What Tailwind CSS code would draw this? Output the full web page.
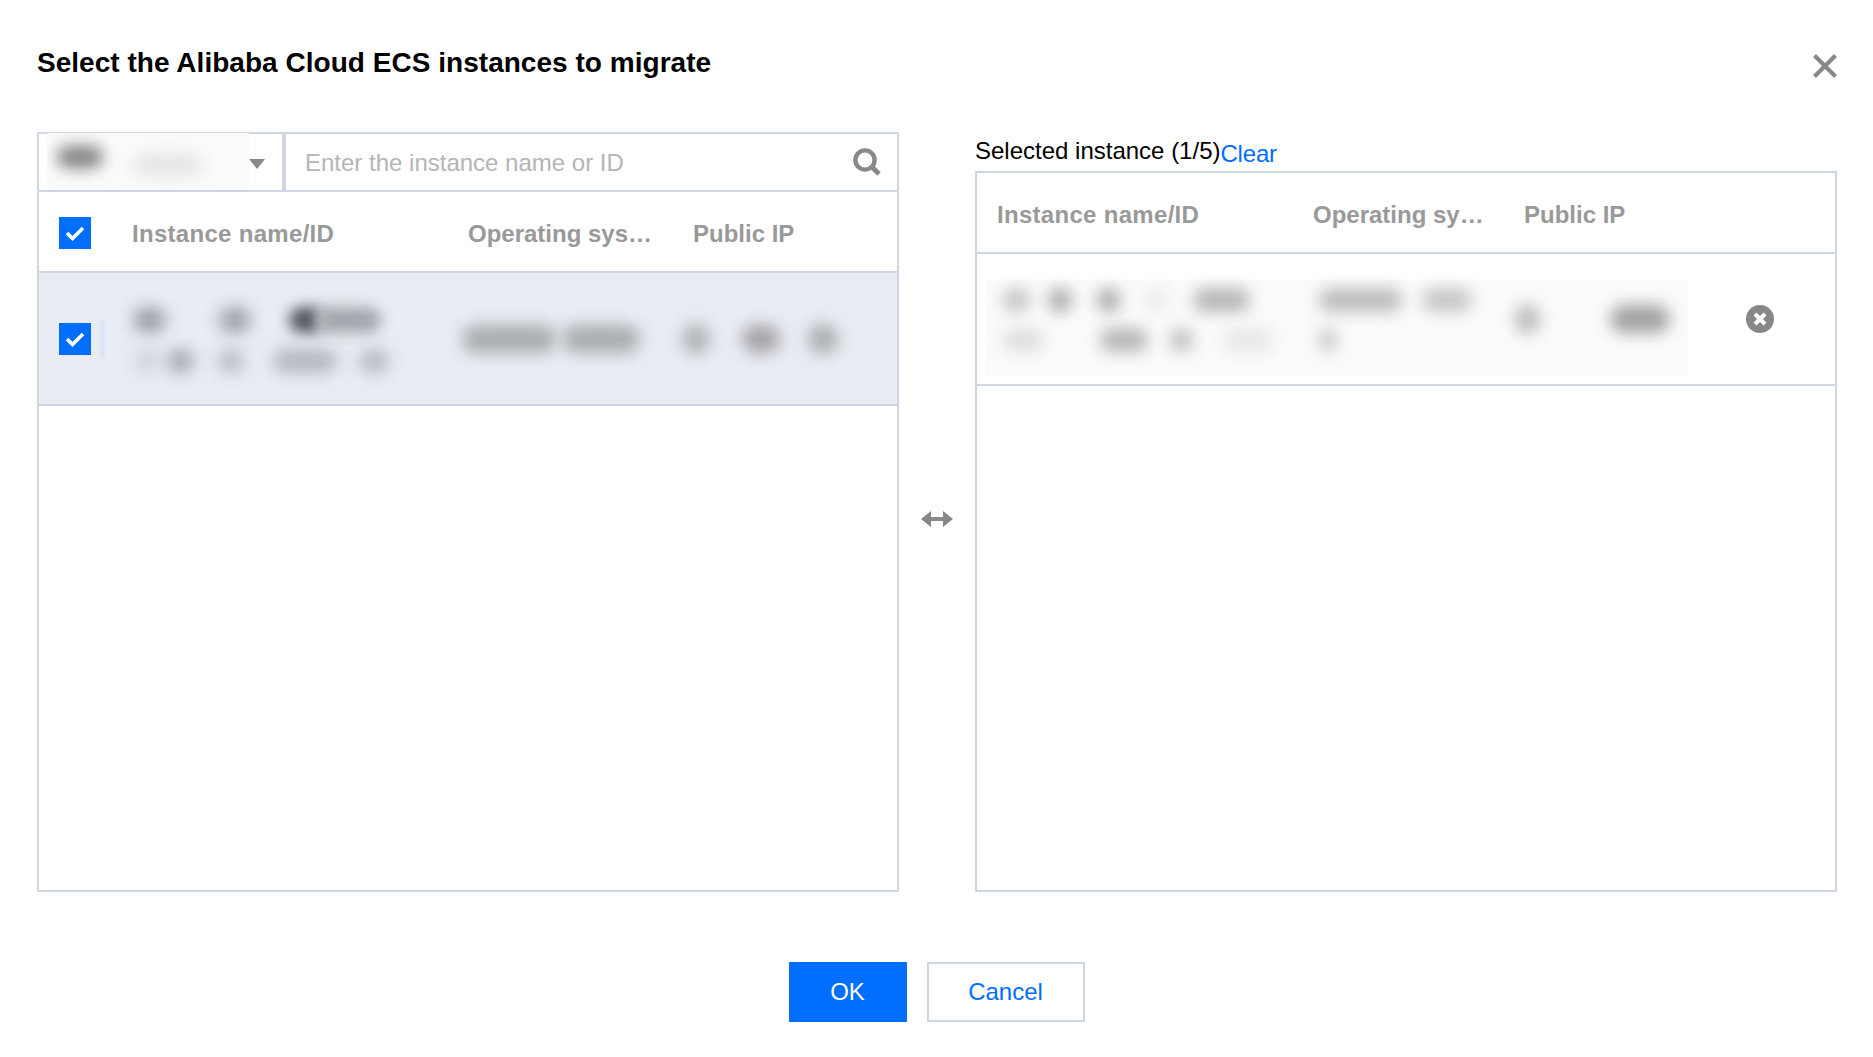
<!DOCTYPE html>
<html>
<head>
<meta charset="utf-8">
<script src="https://cdn.jsdelivr.net/npm/@tailwindcss/browser@4"></script>
</head>
<body class="bg-white overflow-hidden font-['Liberation_Sans',Arial,sans-serif]">
<div class="w-[1873px] h-[1057px] px-[37px] flex flex-col">
  <div class="flex justify-between items-start pt-[45px] h-[132px] -mr-[1px]">
    <h1 class="text-[28px] leading-[36px] font-bold text-black tracking-[0.03px]">Select the Alibaba Cloud ECS instances to migrate</h1>
    <svg class="mt-[9px]" width="24" height="24" viewBox="0 0 24 24"><path d="M1.5 1.5L22.5 22.5M22.5 1.5L1.5 22.5" stroke="#888888" stroke-width="4.2" fill="none"/></svg>
  </div>

  <div class="flex h-[760px]">
    <!-- left panel -->
    <div class="w-[862px] shrink-0 border-2 border-[#cfd6e1] flex flex-col">
      <div class="h-[58px] flex border-b-2 border-[#cfd6e1]">
        <div class="w-[243px] flex items-center relative">
          <div class="ml-[8px] -mt-[1px] w-[202px] h-[57px] bg-[#fbfbfb] overflow-hidden flex items-start">
            <div class="ml-[10px] mt-[13px] w-[46px] h-[22px] rounded-full bg-[#808080] blur-[8px]"></div>
            <div class="ml-[30px] mt-[20px] w-[70px] h-[24px] rounded-full bg-[#e6e6e6] blur-[8px]"></div>
          </div>
          <svg class="mt-[3px]" width="16" height="10" viewBox="0 0 16 10"><path d="M0 0H16L8 10Z" fill="#888888"/></svg>
        </div>
        <div class="w-[4px] bg-[#cfd6e1]"></div>
        <div class="flex-1 flex items-center justify-between pl-[19px] pr-[15px]">
          <span class="text-[24px] text-[#b5b5b5] mt-[2px]">Enter the instance name or ID</span>
          <svg width="30" height="30" viewBox="0 0 30 30"><circle cx="13" cy="13" r="9.6" fill="none" stroke="#888888" stroke-width="4.4"/><path d="M20 20L27 27" stroke="#888888" stroke-width="5" fill="none"/></svg>
        </div>
      </div>
      <div class="h-[81px] flex items-center border-b-2 border-[#cfd6e1] pt-[3px]">
        <span class="ml-[20px] w-[32px] h-[32px] bg-[#006eff] flex items-center justify-center shrink-0">
          <svg width="20" height="16" viewBox="0 0 20 16"><path d="M2 8L7.5 13.5L18 3" stroke="#ffffff" stroke-width="3.6" fill="none"/></svg>
        </span>
        <span class="ml-[41px] w-[336px] mt-[1px] text-[24px] font-bold text-[#999999] tracking-[0.3px]">Instance name/ID</span>
        <span class="w-[225px] mt-[1px] text-[24px] font-bold text-[#999999] whitespace-nowrap">Operating sys…</span>
        <span class="mt-[1px] text-[24px] font-bold text-[#999999]">Public IP</span>
      </div>
      <div class="h-[133px] bg-[#e9ecf2] flex items-center border-b-2 border-[#cfd6e1]">
        <span class="ml-[20px] w-[32px] h-[32px] bg-[#006eff] flex items-center justify-center shrink-0">
          <svg width="20" height="16" viewBox="0 0 20 16"><path d="M2 8L7.5 13.5L18 3" stroke="#ffffff" stroke-width="3.6" fill="none"/></svg>
        </span>
        <span class="ml-[10px] w-[3px] h-[38px] bg-[#d3e2f8] blur-[1px]"></span>
        <div class="ml-[28px] w-[328px] flex flex-col gap-[16px] mt-[3px]">
          <div class="flex h-[26px]">
            <i class="ml-[1px] w-[33px] bg-[#9ea2a8] rounded-full blur-[8px]"></i>
            <i class="ml-[53px] w-[32px] bg-[#a0a4aa] rounded-full blur-[8px]"></i>
            <i class="ml-[38px] w-[30px] bg-[#54575d] rounded-l-full blur-[7px]"></i>
            <i class="w-[62px] bg-[#a3a7ac] rounded-r-full blur-[7px]"></i>
          </div>
          <div class="flex h-[24px]">
            <i class="ml-[3px] w-[24px] bg-[#cfd2d7] rounded-full blur-[8px]"></i>
            <i class="ml-[8px] w-[27px] bg-[#a7aab0] rounded-full blur-[8px]"></i>
            <i class="ml-[24px] w-[26px] bg-[#babdc3] rounded-full blur-[8px]"></i>
            <i class="ml-[29px] w-[64px] bg-[#b5b8be] rounded-full blur-[8px]"></i>
            <i class="ml-[22px] w-[30px] bg-[#b8bbc1] rounded-full blur-[8px]"></i>
          </div>
        </div>
        <i class="ml-[2px] w-[94px] h-[28px] bg-[#a9adb1] rounded-full blur-[8px]"></i>
        <i class="ml-[6px] w-[78px] h-[28px] bg-[#a9adb1] rounded-full blur-[8px]"></i>
        <i class="ml-[42px] w-[28px] h-[30px] bg-[#afb2b6] rounded-full blur-[8px]"></i>
        <i class="ml-[32px] w-[38px] h-[28px] bg-[#a4a4aa] rounded-full blur-[8px]"></i>
        <i class="ml-[28px] w-[30px] h-[30px] bg-[#a9adb0] rounded-full blur-[8px]"></i>
      </div>
      <div class="flex-1"></div>
    </div>

    <!-- swap arrow -->
    <div class="w-[76px] shrink-0 flex items-center justify-center">
      <svg class="mt-[13px]" width="32" height="16" viewBox="0 0 32 16"><path d="M0 8L10 0V6H22V0L32 8L22 16V10H10V16Z" fill="#888888"/></svg>
    </div>

    <!-- right panel -->
    <div class="w-[862px] shrink-0 flex flex-col">
      <div class="h-[39px] flex items-start whitespace-nowrap text-[24px] leading-[36px] text-black">
        <span class="mt-[1px]">Selected instance (1/5)</span><span class="mt-[4px] text-[#006eff] tracking-[-0.2px]">Clear</span>
      </div>
      <div class="flex-1 border-2 border-[#cfd6e1] flex flex-col">
        <div class="h-[81px] flex items-center border-b-2 border-[#cfd6e1] pt-[3px]">
          <span class="ml-[20px] w-[316px] mt-[1px] text-[24px] font-bold text-[#999999] tracking-[0.3px]">Instance name/ID</span>
          <span class="w-[211px] mt-[1px] text-[24px] font-bold text-[#999999] whitespace-nowrap">Operating sy…</span>
          <span class="mt-[1px] text-[24px] font-bold text-[#999999]">Public IP</span>
        </div>
        <div class="h-[132px] flex items-center border-b-2 border-[#cfd6e1]">
          <div class="ml-[8px] w-[703px] h-[96px] mt-[18px] bg-[#fbfbfb] flex items-center">
            <div class="ml-[18px] w-[302px] flex flex-col gap-[16px] -mt-[16px]">
              <div class="flex h-[24px]">
                <i class="w-[27px] bg-[#c4c4c4] rounded-full blur-[8px]"></i>
                <i class="ml-[18px] w-[24px] bg-[#a8a8a8] rounded-full blur-[8px]"></i>
                <i class="ml-[25px] w-[23px] bg-[#a8a8a8] rounded-full blur-[8px]"></i>
                <i class="ml-[25px] w-[25px] bg-[#ececec] rounded-full blur-[8px]"></i>
                <i class="ml-[23px] w-[57px] bg-[#b6b6b6] rounded-full blur-[8px]"></i>
              </div>
              <div class="flex h-[24px]">
                <i class="w-[40px] bg-[#dedede] rounded-full blur-[8px]"></i>
                <i class="ml-[57px] w-[48px] bg-[#b6b6b6] rounded-full blur-[8px]"></i>
                <i class="ml-[22px] w-[23px] bg-[#bebebe] rounded-full blur-[8px]"></i>
                <i class="ml-[30px] w-[50px] bg-[#e8e8e8] rounded-full blur-[8px]"></i>
              </div>
            </div>
            <div class="ml-[14px] w-[196px] flex flex-col gap-[16px] -mt-[16px]">
              <div class="flex h-[24px]">
                <i class="w-[83px] bg-[#bcbcbc] rounded-full blur-[8px]"></i>
                <i class="ml-[20px] w-[50px] bg-[#c6c6c6] rounded-full blur-[8px]"></i>
              </div>
              <div class="flex h-[24px]">
                <i class="w-[18px] bg-[#c6c6c6] rounded-full blur-[8px]"></i>
              </div>
            </div>
            <i class="w-[25px] h-[30px] -mt-[18px] bg-[#bcbcbc] rounded-full blur-[8px]"></i>
            <i class="ml-[70px] w-[60px] h-[28px] -mt-[18px] bg-[#a2a2a2] rounded-full blur-[8px]"></i>
          </div>
          <svg class="ml-[58px]" width="28" height="28" viewBox="0 0 28 28"><circle cx="14" cy="14" r="14" fill="#888888"/><path d="M9 9L19 19M19 9L9 19" stroke="#ffffff" stroke-width="4" fill="none"/></svg>
        </div>
        <div class="flex-1"></div>
      </div>
    </div>
  </div>

  <div class="mt-[70px] flex justify-center gap-[20px]">
    <button class="w-[118px] h-[60px] bg-[#006eff] text-white text-[24px]">OK</button>
    <button class="w-[158px] h-[60px] border-2 border-[#cfd6e1] bg-white text-[#006eff] text-[24px]">Cancel</button>
  </div>
</div>
</body>
</html>
